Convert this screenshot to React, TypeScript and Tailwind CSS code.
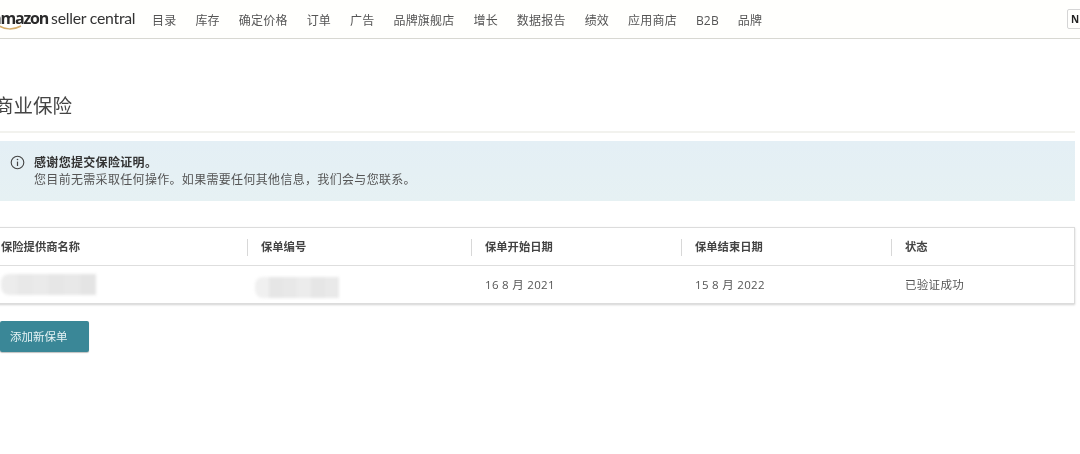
const cjk = "font-['Open_Sans','Noto_Sans_CJK_SC',sans-serif]";
const nav = ["目录", "库存", "确定价格", "订单", "广告", "品牌旗舰店", "增长", "数据报告", "绩效", "应用商店", "B2B", "品牌"];
const cols = [
  { label: "保险提供商名称", w: "w-[260px]" },
  { label: "保单编号", w: "w-[224px]" },
  { label: "保单开始日期", w: "w-[210px]" },
  { label: "保单结束日期", w: "w-[210px]" },
  { label: "状态", w: "flex-1" },
];

function Redacted({ segments }: { segments: string[] }) {
  return (
    <div className="flex h-[21px] overflow-hidden rounded-l-[8px] blur-[1.5px]">
      {segments.map((c, i) => (
        <div key={i} className="h-full w-[16px]" style={{ backgroundColor: c }} />
      ))}
    </div>
  );
}

export default function App() {
  return (
    <div className={`${cjk} h-[454px] w-[1080px] overflow-hidden bg-white text-[#333] blur-[0.35px]`}>
      <header className="flex h-[39px] items-center justify-between border-b border-[#d8d8d2] bg-[#fffffd]">
        <div className="flex items-center">
          <div className="relative -ml-[8px] flex h-[38px] w-[160px] shrink-0 items-center whitespace-nowrap pb-[3px] leading-none">
            <span className="text-[16px] font-bold tracking-[-1.2px] text-[#2a2a2a]">amazon</span>
            <span className="ml-[3px] font-['Lato',sans-serif] text-[15.8px] tracking-[-0.25px] text-[#333]">seller central</span>
            <svg className="absolute left-[5px] top-[24px]" width="26" height="7" viewBox="0 0 26 7" fill="none">
              <path d="M1 1C7 6 17 6 24 2" stroke="#d6ad6a" strokeWidth="1.5" />
            </svg>
          </div>
          <nav className="flex gap-[19px] pt-[3px] text-[12px] tracking-[0.2px] text-[#555]">
            {nav.map((n) => (
              <span key={n}>{n}</span>
            ))}
          </nav>
        </div>
        <div className="-mr-[10px] flex h-[20px] w-[23px] items-center rounded-[2px] border border-[#d5d5d5] pl-[3px] text-[10px] font-bold text-[#222]">
          N
        </div>
      </header>

      <main className="-ml-[14px] w-[1089px]">
        <h1 className="pl-[8px] pt-[53px] text-[19.5px] leading-[28px] text-[#444]">商业保险</h1>
        <div className="mt-[11px] h-[2px] bg-[#f2f2ee]" />

        <div className="mt-[8px] flex h-[60px] gap-[9px] bg-gradient-to-b from-[#e4eff5] to-[#e6f1f3] pl-[24px] pt-[13px]">
          <svg className="mt-[1px] shrink-0" width="15" height="15" viewBox="0 0 15 15" fill="none">
            <circle cx="7.5" cy="7.5" r="6.3" stroke="#444" strokeWidth="1.1" />
            <path d="M7.5 6.6V11" stroke="#444" strokeWidth="1.2" />
            <circle cx="7.5" cy="4.5" r="0.8" fill="#444" />
          </svg>
          <div className="text-[12px] leading-[17px] tracking-[0.32px] text-[#555]">
            <p className="font-bold text-[#333]">感谢您提交保险证明。</p>
            <p>您目前无需采取任何操作。如果需要任何其他信息，我们会与您联系。</p>
          </div>
        </div>

        <div className="mt-[26px] border border-[#dcdcdc] bg-white shadow-[0_1px_2px_rgba(0,0,0,0.18)]">
          <div className="flex h-[38px] items-center border-b border-[#dedede] pt-[1px]">
            {cols.map((c, i) => (
              <div key={c.label} className={`${c.w} flex h-[18px] items-center`}>
                {i > 0 && <span className="mr-[13px] h-[17px] w-px bg-[#d8d8d8]" />}
                <span className={`${i === 0 ? "pl-[14px]" : ""} text-[11.3px] font-semibold text-[#444]`}>{c.label}</span>
              </div>
            ))}
          </div>
          <div className="flex h-[37px] items-center text-[11.5px] tracking-[0.3px] text-[#555]">
            <div className="w-[260px] pl-[14px]">
              <div className="w-[95px]">
                <Redacted segments={["#ececec", "#e8e8e8", "#eaeaea", "#e6e6e6", "#e8e8e8", "#e4e4e4"]} />
              </div>
            </div>
            <div className="w-[224px] pt-[6px] pl-[8px]">
              <div className="w-[84px]">
                <Redacted segments={["#f0f0f0", "#e6e6e6", "#e8e8e8", "#ececec", "#e6e6e6", "#e9e9e9"]} />
              </div>
            </div>
            <div className="w-[210px] pl-[14px]">16 8 月 2021</div>
            <div className="w-[210px] pl-[14px]">15 8 月 2022</div>
            <div className="flex-1 pl-[14px]">已验证成功</div>
          </div>
        </div>

        <button className="mt-[17px] ml-[14px] flex h-[31px] w-[89px] items-center rounded-[2px] bg-[#3a8797] pl-[10px] text-[11.5px] text-[#e6f3f5] shadow-[0_1px_1px_rgba(0,0,0,0.25)]">
          添加新保单
        </button>
      </main>
    </div>
  );
}
